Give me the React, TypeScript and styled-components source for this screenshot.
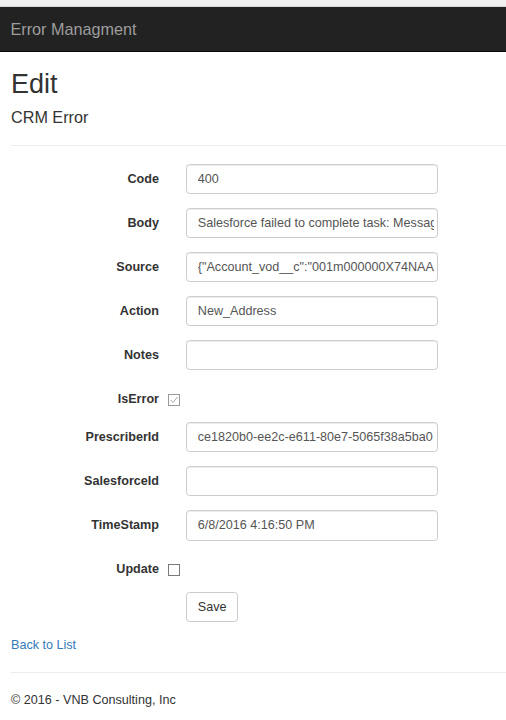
import React from 'react';
import styled, { createGlobalStyle } from 'styled-components';

const GlobalStyle = createGlobalStyle`
  html, body { margin: 0; padding: 0; background: #fff; }
  body {
    font-family: "Liberation Sans", Arial, sans-serif;
    font-size: 12.6px;
    line-height: 18px;
    color: #333;
  }
  * { box-sizing: border-box; }
`;

const TopStrip = styled.div`
  height: 7px;
  background: #f0f0f0;
  border-bottom: 1px solid #d6d6d6;
`;

const Navbar = styled.nav`
  height: 45px;
  background: #222;
  border-bottom: 1px solid #080808;
  display: flex;
  align-items: center;
  padding-left: 10.5px;
`;

const Brand = styled.a`
  font-size: 16.2px;
  line-height: 44px;
  color: #9d9d9d;
  text-decoration: none;
`;

const Container = styled.main`
  padding: 0 0 0 11px;
`;

const Title = styled.h2`
  margin: 18px 0 9px;
  font-size: 27px;
  font-weight: 400;
  line-height: 1.1;
`;

const Subtitle = styled.h4`
  margin: 9px 0 0;
  font-size: 16.2px;
  font-weight: 400;
  line-height: 1.1;
`;

const Divider = styled.hr`
  margin: 18px 0;
  border: 0;
  height: 0;
  border-top: 1px solid #eee;
`;

const FormGroup = styled.div`
  display: grid;
  grid-template-columns: 148px 27px 252px;
  margin-bottom: 13.5px;
`;

const Label = styled.label`
  grid-column: 1;
  text-align: right;
  font-weight: bold;
  padding-top: 6.3px;
  line-height: 18px;
`;

const TextInput = styled.input`
  grid-column: 3;
  height: 30.6px;
  width: 100%;
  padding: 5.4px 3px 5.4px 10.8px;
  border: 1px solid #ccc;
  border-radius: 3.6px;
  font: inherit;
  line-height: 18px;
  color: #555;
  background: #fff;
  box-shadow: inset 0 1px 1px rgba(0, 0, 0, 0.075);
  outline: none;
`;

const CheckCell = styled.div`
  grid-column: 2;
  padding-top: 10.4px;
  padding-left: 9px;
`;

const CheckBox = styled.span<{ $checked?: boolean }>`
  display: flex;
  align-items: center;
  justify-content: center;
  width: 12px;
  height: 12px;
  border: 1px solid ${(p) => (p.$checked ? '#9a9a9a' : '#7a7a7a')};
  background: #fff;
`;

const SaveButton = styled.button`
  grid-column: 3;
  justify-self: start;
  height: 30.6px;
  padding: 0 10.8px;
  font: inherit;
  color: #333;
  background: #fff;
  border: 1px solid #ccc;
  border-radius: 3.6px;
`;

const BackRow = styled.div`
  line-height: 18px;
`;

const Link = styled.a`
  color: #337ab7;
  text-decoration: none;
`;

const FooterText = styled.p`
  margin: 0 0 9px;
`;

const Check: React.FC<{ checked?: boolean }> = ({ checked }) => (
  <CheckBox $checked={checked}>
    {checked && (
      <svg width="10" height="10" viewBox="0 0 10 10">
        <polyline points="1.5,5 4,7.5 8.5,2" fill="none" stroke="#a8a8a8" strokeWidth="1" />
      </svg>
    )}
  </CheckBox>
);

const textFields: Array<[string, string]> = [
  ['Code', '400'],
  ['Body', 'Salesforce failed to complete task: Message: Required fields are missing'],
  ['Source', '{"Account_vod__c":"001m000000X74NAAA3","Name":"New_Address"}'],
  ['Action', 'New_Address'],
  ['Notes', ''],
];

const textFields2: Array<[string, string]> = [
  ['PrescriberId', 'ce1820b0-ee2c-e611-80e7-5065f38a5ba0'],
  ['SalesforceId', ''],
  ['TimeStamp', '6/8/2016 4:16:50 PM'],
];

export default function App() {
  return (
    <>
      <GlobalStyle />
      <TopStrip />
      <Navbar>
        <Brand href="#">Error Managment</Brand>
      </Navbar>
      <Container>
        <Title>Edit</Title>
        <Subtitle>CRM Error</Subtitle>
        <Divider />
        <form onSubmit={(e) => e.preventDefault()}>
          {textFields.map(([label, value]) => (
            <FormGroup key={label}>
              <Label>{label}</Label>
              <TextInput defaultValue={value} />
            </FormGroup>
          ))}
          <FormGroup>
            <Label>IsError</Label>
            <CheckCell>
              <Check checked />
            </CheckCell>
          </FormGroup>
          {textFields2.map(([label, value]) => (
            <FormGroup key={label}>
              <Label>{label}</Label>
              <TextInput defaultValue={value} />
            </FormGroup>
          ))}
          <FormGroup>
            <Label>Update</Label>
            <CheckCell>
              <Check />
            </CheckCell>
          </FormGroup>
          <FormGroup>
            <SaveButton type="submit">Save</SaveButton>
          </FormGroup>
        </form>
        <BackRow>
          <Link href="#">Back to List</Link>
        </BackRow>
        <Divider />
        <footer>
          <FooterText>© 2016 - VNB Consulting, Inc</FooterText>
        </footer>
      </Container>
    </>
  );
}
